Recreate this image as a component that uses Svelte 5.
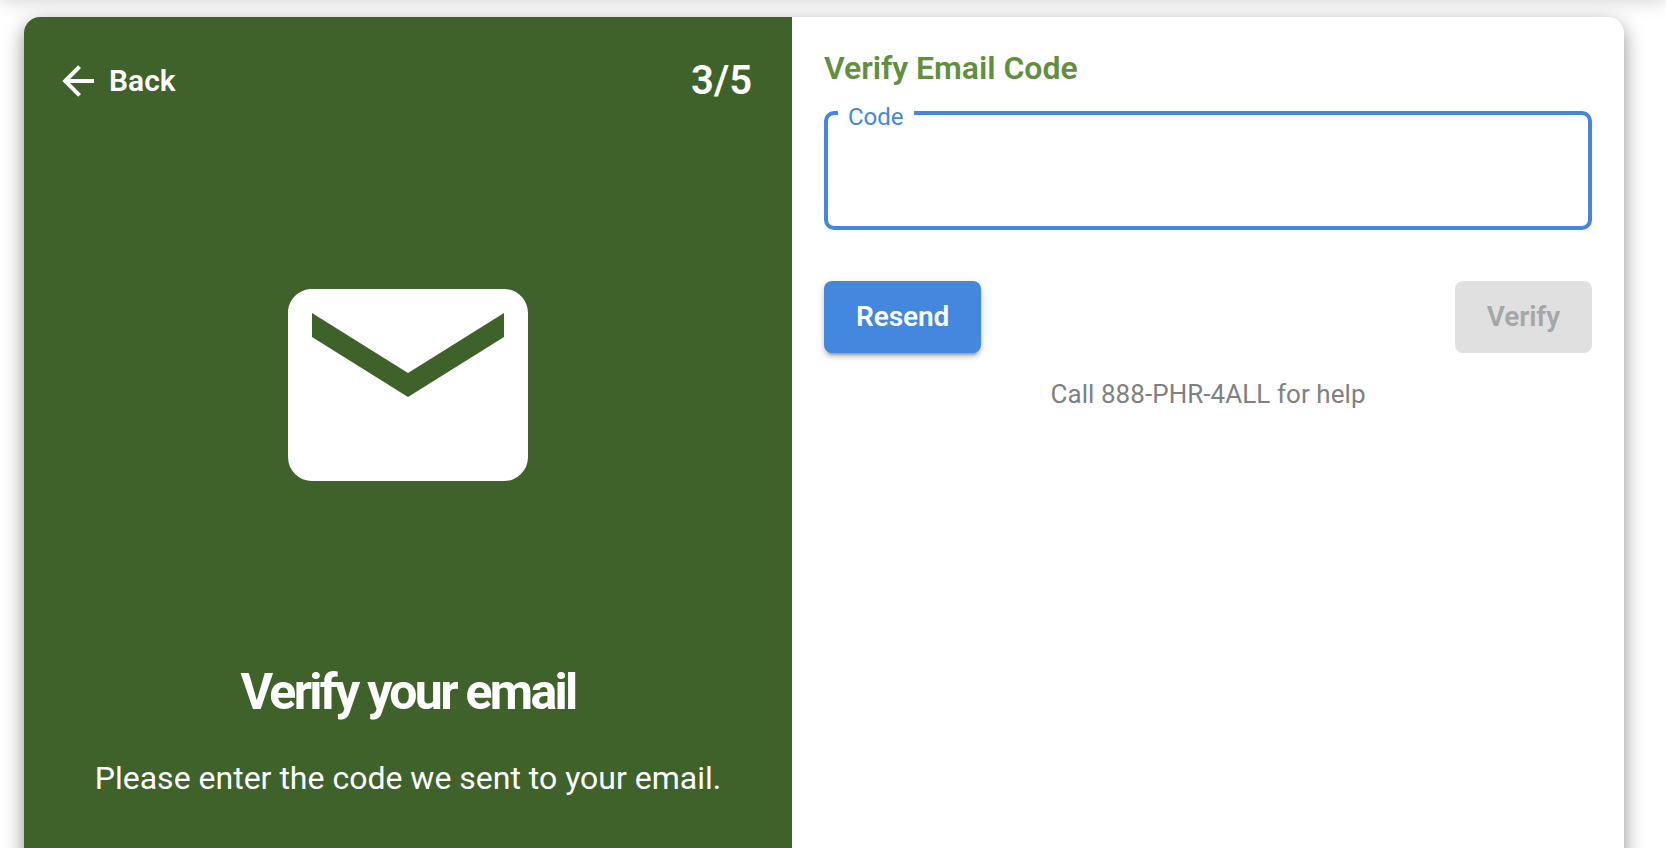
<script>
    let code = '';
    const step = 3;
    const totalSteps = 5;

    $: canVerify = code.length > 0;
</script>

<style>
    :global(body) {
        background-color: white;
        overflow: hidden;
    }

    .page {
        height: 848px;
        overflow: hidden;
        display: flex;
        flex-direction: column;
        font-family: Roboto, "Liberation Sans", sans-serif;
    }

    .app-bar {
        height: 56px;
        flex: none;
        margin-top: -60px;
        background-color: white;
        box-shadow: 0 4px 20px rgba(0, 0, 0, 0.2);
    }

    .card {
        display: flex;
        flex: none;
        width: 1600px;
        height: 900px;
        margin: 21px 0 0 24px;
        border-radius: 16px;
        background-color: white;
        box-shadow: 0 7px 20px rgba(0, 0, 0, 0.44);
    }

    .intro {
        display: flex;
        flex-direction: column;
        align-items: center;
        box-sizing: border-box;
        width: 768px;
        padding: 39px 40px 0;
        border-radius: 16px 0 0 16px;
        background-color: #3e6229;
        color: white;
    }

    .intro-header {
        display: flex;
        justify-content: space-between;
        align-items: center;
        align-self: stretch;
        height: 48px;
    }

    .back {
        display: flex;
        align-items: center;
        gap: 7px;
        margin-left: -10px;
        padding: 0;
        border: none;
        background: none;
        color: inherit;
        font: 600 30px Roboto, sans-serif;
        cursor: pointer;
    }

    .back svg {
        width: 48px;
        height: 48px;
        margin-top: 2px;
        fill: currentColor;
    }

    .step {
        font-size: 40px;
        font-weight: 600;
    }

    .mail {
        width: 288px;
        height: 288px;
        margin-top: 137px;
        fill: currentColor;
    }

    h1 {
        margin: 131px 0 0;
        font-size: 50px;
        line-height: 64px;
        font-weight: 700;
        letter-spacing: -2.7px;
    }

    .intro p {
        margin: 30px 0 0;
        font-size: 32px;
        line-height: 48px;
    }

    .verify {
        flex: 1;
        padding: 31px 32px;
    }

    h2 {
        margin: 0;
        font-size: 32px;
        line-height: 40px;
        font-weight: 600;
        letter-spacing: -0.04px;
        color: #618f3e;
    }

    .field {
        box-sizing: border-box;
        height: 126px;
        margin: 16px 0 0;
        padding: 0 0 0 10px;
        border: 4px solid #4487de;
        border-radius: 10px;
        color: #4487de;
    }

    .field legend {
        padding: 0 10px;
        font-size: 24px;
        line-height: 18px;
    }

    .field legend span {
        position: relative;
        top: 4px;
    }

    .field input {
        width: 700px;
        height: 90px;
        padding: 0 10px;
        border: none;
        outline: none;
        background: none;
        font: 32px Roboto, sans-serif;
    }

    .actions {
        display: flex;
        justify-content: space-between;
        margin-top: 51px;
    }

    .btn {
        height: 72px;
        padding: 0 32px 2px;
        border: none;
        border-radius: 8px;
        background-color: #4487de;
        color: white;
        font: 600 28px Roboto, sans-serif;
        letter-spacing: -0.1px;
        box-shadow: 0 6px 2px -4px rgba(0, 0, 0, 0.2), 0 4px 4px 0 rgba(0, 0, 0, 0.14), 0 2px 10px 0 rgba(0, 0, 0, 0.12);
        cursor: pointer;
    }

    .btn:disabled {
        background-color: #e0e0e0;
        color: #a6a6a6;
        box-shadow: none;
        cursor: default;
    }

    .help {
        margin: 21px 0 0;
        font-size: 26px;
        line-height: 40px;
        letter-spacing: 0.06px;
        text-align: center;
        color: #808080;
    }
</style>

<div class="page">
    <header class="app-bar"></header>
    <main class="card">
        <section class="intro">
            <div class="intro-header">
                <button class="back">
                    <svg viewBox="0 0 24 24"><path d="M20,11V13H8L13.5,18.5L12.08,19.92L4.16,12L12.08,4.08L13.5,5.5L8,11H20Z" /></svg>
                    <span>Back</span>
                </button>
                <span class="step">{step}/{totalSteps}</span>
            </div>
            <svg class="mail" viewBox="0 0 24 24"><path d="M20,8L12,13L4,8V6L12,11L20,6M20,4H4C2.89,4 2,4.89 2,6V18A2,2 0 0,0 4,20H20A2,2 0 0,0 22,18V6C22,4.89 21.1,4 20,4Z" /></svg>
            <h1>Verify your email</h1>
            <p>Please enter the code we sent to your email.</p>
        </section>
        <section class="verify">
            <h2>Verify Email Code</h2>
            <fieldset class="field">
                <legend><span>Code</span></legend>
                <input aria-label="Code" bind:value={code} />
            </fieldset>
            <div class="actions">
                <button class="btn">Resend</button>
                <button class="btn" disabled={!canVerify}>Verify</button>
            </div>
            <p class="help">Call 888-PHR-4ALL for help</p>
        </section>
    </main>
</div>
